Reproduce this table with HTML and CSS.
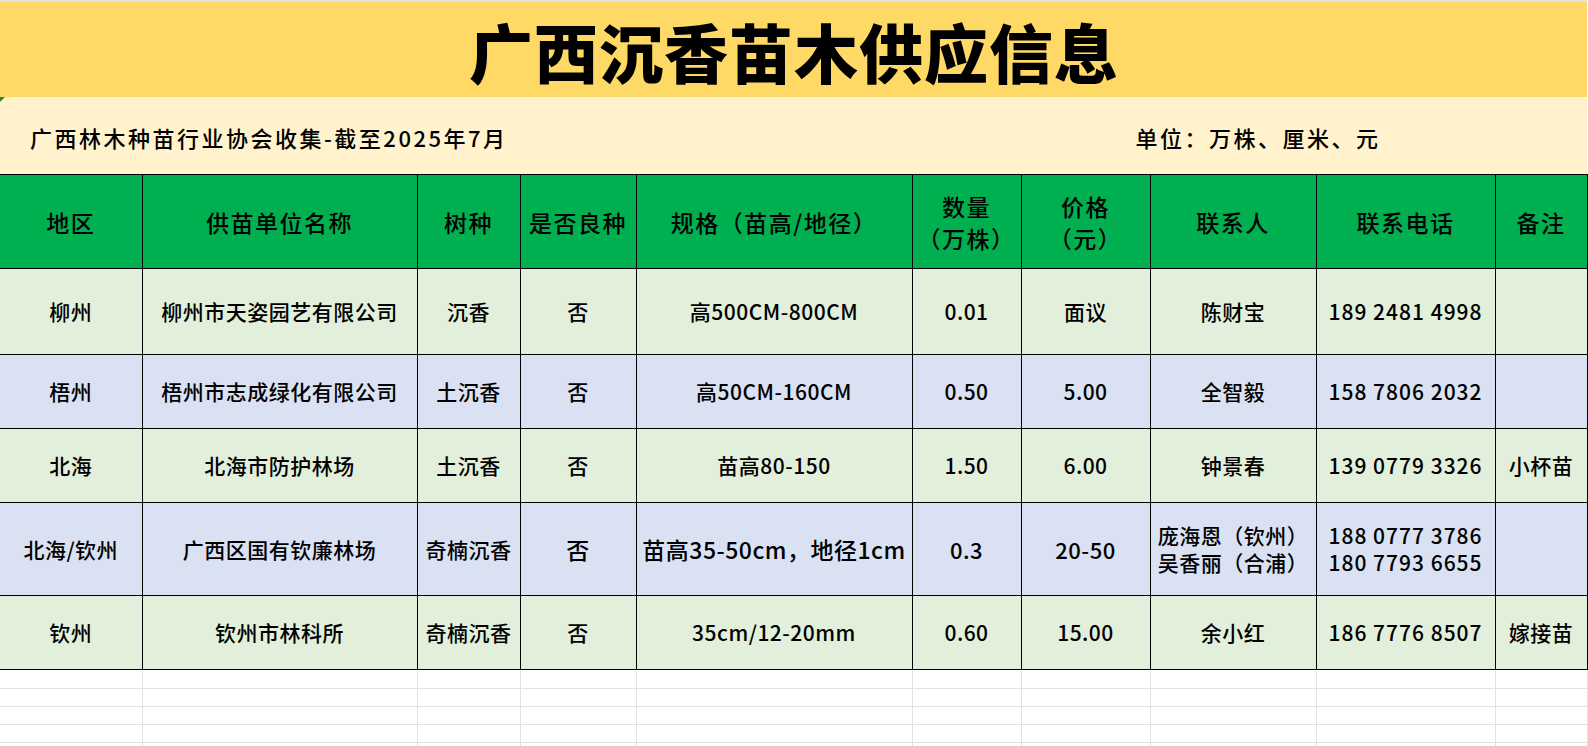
FILE: index.html
```html
<!DOCTYPE html>
<html lang="zh-CN">
<head>
<meta charset="utf-8">
<title>广西沉香苗木供应信息</title>
<link rel="stylesheet" href="styles.css">
</head>
<body>
<div class="sheet">
  <div class="top-strip"></div>
  <header class="title-band">
    <h1 class="title">广西沉香苗木供应信息</h1>
  </header>
  <div class="sub-band">
    <span class="marker"></span>
    <div class="sub-left">广西林木种苗行业协会收集-截至2025年7月</div>
    <div class="sub-unit">单位：万株、厘米、元</div>
    <div class="sub-end"></div>
  </div>
  <table class="grid">
    <colgroup>
      <col class="c1"><col class="c2"><col class="c3"><col class="c4"><col class="c5">
      <col class="c6"><col class="c7"><col class="c8"><col class="c9"><col class="c10">
    </colgroup>
    <thead>
      <tr class="head">
        <th>地区</th>
        <th>供苗单位名称</th>
        <th>树种</th>
        <th>是否良种</th>
        <th>规格（苗高/地径）</th>
        <th>数量<br>（万株）</th>
        <th>价格<br>（元）</th>
        <th>联系人</th>
        <th>联系电话</th>
        <th>备注</th>
      </tr>
    </thead>
    <tbody class="data">
      <tr class="green r1">
        <td>柳州</td>
        <td>柳州市天姿园艺有限公司</td>
        <td>沉香</td>
        <td>否</td>
        <td>高500CM-800CM</td>
        <td>0.01</td>
        <td>面议</td>
        <td>陈财宝</td>
        <td class="phone">189 2481 4998</td>
        <td></td>
      </tr>
      <tr class="blue r2">
        <td>梧州</td>
        <td>梧州市志成绿化有限公司</td>
        <td>土沉香</td>
        <td>否</td>
        <td>高50CM-160CM</td>
        <td>0.50</td>
        <td>5.00</td>
        <td>全智毅</td>
        <td class="phone">158 7806 2032</td>
        <td></td>
      </tr>
      <tr class="green r3">
        <td>北海</td>
        <td>北海市防护林场</td>
        <td>土沉香</td>
        <td>否</td>
        <td>苗高80-150</td>
        <td>1.50</td>
        <td>6.00</td>
        <td>钟景春</td>
        <td class="phone">139 0779 3326</td>
        <td>小杯苗</td>
      </tr>
      <tr class="blue r4">
        <td>北海/钦州</td>
        <td>广西区国有钦廉林场</td>
        <td>奇楠沉香</td>
        <td class="big">否</td>
        <td class="big">苗高35-50cm，地径1cm</td>
        <td class="mid">0.3</td>
        <td class="mid">20-50</td>
        <td class="lines">庞海恩（钦州）<br>吴香丽（合浦）</td>
        <td class="phone lines">188 0777 3786<br>180 7793 6655</td>
        <td></td>
      </tr>
      <tr class="green r5">
        <td>钦州</td>
        <td>钦州市林科所</td>
        <td>奇楠沉香</td>
        <td>否</td>
        <td>35cm/12-20mm</td>
        <td>0.60</td>
        <td>15.00</td>
        <td>余小红</td>
        <td class="phone">186 7776 8507</td>
        <td>嫁接苗</td>
      </tr>
    </tbody>
    <tbody class="blank">
      <tr class="b1"><td></td><td></td><td></td><td></td><td></td><td></td><td></td><td></td><td></td><td></td></tr>
      <tr><td></td><td></td><td></td><td></td><td></td><td></td><td></td><td></td><td></td><td></td></tr>
      <tr><td></td><td></td><td></td><td></td><td></td><td></td><td></td><td></td><td></td><td></td></tr>
      <tr><td></td><td></td><td></td><td></td><td></td><td></td><td></td><td></td><td></td><td></td></tr>
      <tr><td></td><td></td><td></td><td></td><td></td><td></td><td></td><td></td><td></td><td></td></tr>
    </tbody>
  </table>
</div>
</body>
</html>
```

FILE: styles.css
```css
* { box-sizing: border-box; }

html, body {
  margin: 0;
  padding: 0;
  background: #ffffff;
  overflow: hidden;
}

body {
  width: 1588px;
  height: 746px;
  font-family: "Noto Sans CJK SC", "Noto Sans", sans-serif;
  color: #000;
}

.sheet {
  width: 1587px;
}

.top-strip {
  height: 2px;
  background: #e2e2e2;
}

.title-band {
  height: 95px;
  background: #ffd966;
  display: flex;
  align-items: center;
  justify-content: center;
}

.title {
  margin: 0;
  font-size: 64px;
  font-weight: 900;
  letter-spacing: 1px;
  line-height: 1;
  padding-left: 1px;
}

.sub-band {
  position: relative;
  height: 77px;
  background: #fff2cc;
  display: grid;
  grid-template-columns: 1021px 474px 1fr;
  align-items: center;
  font-size: 22px;
  letter-spacing: 2.5px;
  font-weight: 500;
  padding-top: 2px;
}

.marker {
  position: absolute;
  left: 0;
  top: 0;
  width: 0;
  height: 0;
  border-top: 5px solid #2f8a1f;
  border-right: 5px solid transparent;
}

.sub-left {
  padding-left: 30px;
}

.sub-unit {
  text-align: center;
}

.grid {
  border-collapse: collapse;
  table-layout: fixed;
  width: 1587px;
}

.c1 { width: 142px; }
.c2 { width: 275px; }
.c3 { width: 103px; }
.c4 { width: 116px; }
.c5 { width: 276px; }
.c6 { width: 109px; }
.c7 { width: 129px; }
.c8 { width: 166px; }
.c9 { width: 179px; }
.c10 { width: 92px; }

.grid th,
.grid td {
  border: 1px solid #000;
  padding: 0;
  text-align: center;
  vertical-align: middle;
  white-space: nowrap;
  overflow: hidden;
}

.grid tr > :first-child {
  border-left: none;
}

.head th {
  background: #00b050;
  height: 94px;
  font-size: 23px;
  font-weight: 500;
  letter-spacing: 1.5px;
  line-height: 32px;
}

.data td {
  font-size: 21px;
  font-weight: 500;
  letter-spacing: 0.5px;
  line-height: 27px;
}

.green td { background: #e2efda; }
.blue td { background: #d9e1f2; }

.r1 td { height: 86px; }
.r2 td { height: 74px; }
.r3 td { height: 74px; }
.r4 td { height: 93px; }
.r5 td { height: 74px; }

.data td.phone {
  letter-spacing: 1px;
}

.data td.big {
  font-size: 23px;
}

.data td.mid {
  font-size: 22px;
}

.data td.lines {
  line-height: 27px;
}

.blank td {
  height: 18px;
  border: 1px solid #e1e1e1;
  background: #fff;
}

.blank .b1 td {
  height: 19px;
}
```
